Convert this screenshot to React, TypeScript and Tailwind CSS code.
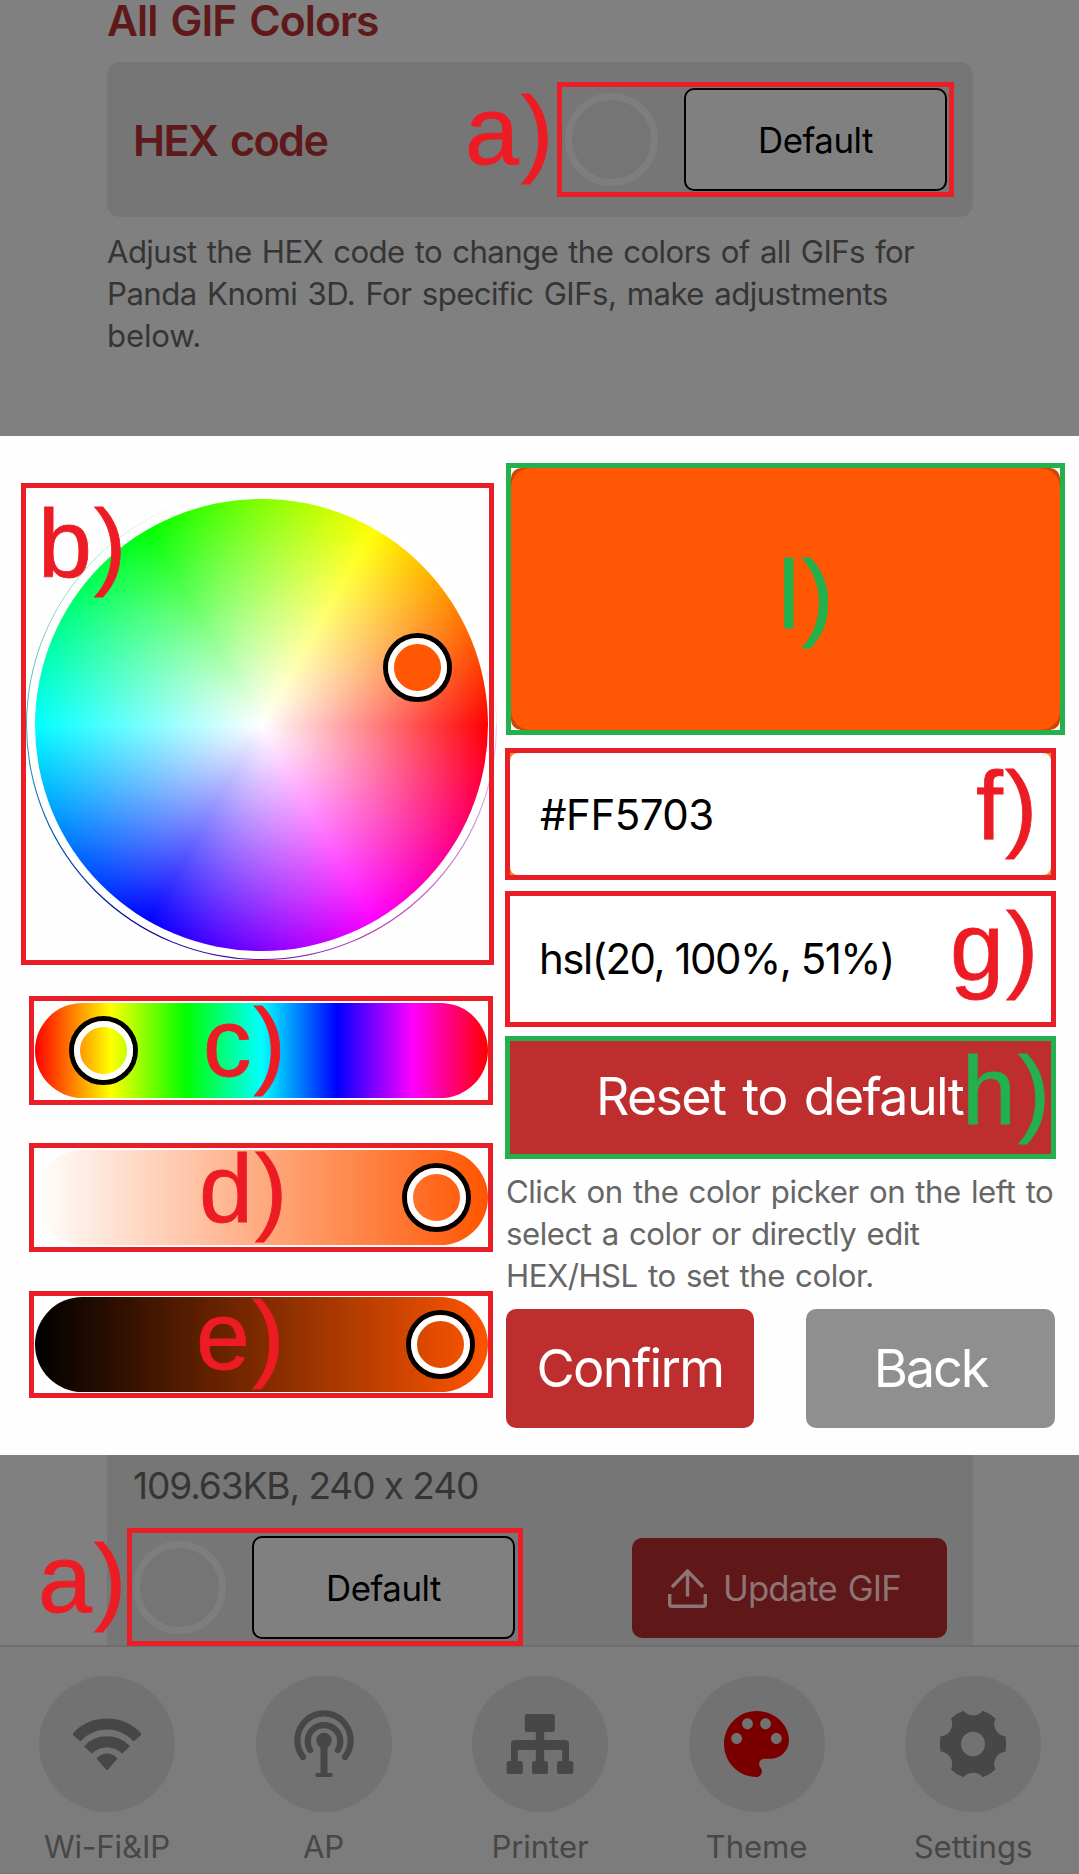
import type { ReactNode } from "react";

const HUE_WHEEL =
  "bg-[radial-gradient(circle_closest-side,#fff,transparent),conic-gradient(from_90deg,#f00,#f0f,#00f,#0ff,#0f0,#ff0,#f00)]";

function Mark({ className, children }: { className: string; children: ReactNode }) {
  return (
    <span
      className={`pointer-events-none absolute z-20 font-['Liberation_Sans',sans-serif] text-[97px] leading-[97px] tracking-[2px] whitespace-nowrap [-webkit-text-stroke:0.8px_currentColor] ${className}`}
    >
      {children}
    </span>
  );
}

function Frame({ className }: { className: string }) {
  return <div className={`pointer-events-none absolute z-10 border-[5px] ${className}`} />;
}

function Swatch() {
  return <div className="size-[93px] shrink-0 rounded-full border-[7px] border-[#7e7e7e] bg-[#757575]" />;
}

function DefaultButton() {
  return (
    <button className="flex h-[103px] w-[263px] shrink-0 items-center justify-center rounded-[10px] border-2 border-black bg-[#808080] pt-px text-[34.8px] tracking-[-0.47px] text-black">
      Default
    </button>
  );
}

function Handle({ className }: { className: string }) {
  return (
    <div className={`absolute size-[69px] rounded-full border-[5.5px] border-black ${className}`}>
      <div className="size-full rounded-full border-[6px] border-white" />
    </div>
  );
}

function WifiIcon() {
  return (
    <svg viewBox="0 0 68 68" className="size-[68px]" fill="none" stroke="currentColor" strokeWidth="11">
      <path d="M3.2 27.8A41.3 41.3 0 0 1 64.8 27.8" />
      <path d="M15 40A26 26 0 0 1 53 40" />
      <path d="M24.5 48.5C30 42.8 38 42.8 43.5 48.5L34 59.5Z" fill="currentColor" strokeWidth="1.5" strokeLinejoin="round" />
    </svg>
  );
}

function AntennaIcon() {
  return (
    <svg viewBox="0 0 68 68" className="size-[68px]" fill="none" stroke="currentColor" strokeWidth="6.2" strokeLinecap="round">
      <path d="M13 47A26.6 27 0 1 1 55 47" />
      <path d="M20 40A16.3 16.5 0 1 1 48 40" />
      <circle cx="34" cy="30.5" r="7.8" fill="currentColor" stroke="none" />
      <path d="M34 36V64" strokeWidth="7" strokeLinecap="butt" />
      <rect x="25.7" y="63" width="16.8" height="4" rx="1.2" fill="currentColor" stroke="none" />
    </svg>
  );
}

function NetworkIcon() {
  return (
    <svg viewBox="0 0 68 68" className="size-[68px]" fill="currentColor">
      <rect x="18.8" y="4" width="30" height="18" rx="2.5" />
      <rect x="29.8" y="20" width="8.4" height="33" />
      <path d="M5 53V34Q5 30 9 30H59Q63 30 63 34V53H56.2V40H11.8V53Z" />
      <rect x="0.6" y="51" width="16.3" height="13" rx="2.5" />
      <rect x="26" y="51" width="16" height="13" rx="2.5" />
      <rect x="51" y="51" width="16.3" height="13" rx="2.5" />
    </svg>
  );
}

function PaletteIcon() {
  return (
    <svg viewBox="3 3 18 18" preserveAspectRatio="none" className="h-[66px] w-[65px]" fill="currentColor">
      <path d="M12 3c-4.97 0-9 4.03-9 9s4.03 9 9 9c.83 0 1.5-.67 1.5-1.5 0-.39-.15-.74-.39-1.01-.23-.26-.38-.61-.38-.99 0-.83.67-1.5 1.5-1.5H16c2.76 0 5-2.24 5-5 0-4.42-4.03-8-9-8zm-5.5 9c-.83 0-1.5-.67-1.5-1.5S5.67 9 6.5 9 8 9.67 8 10.5 7.33 12 6.5 12zm3-4C8.67 8 8 7.33 8 6.5S8.67 5 9.5 5s1.5.67 1.5 1.5S10.33 8 9.5 8zm5 0c-.83 0-1.5-.67-1.5-1.5S13.67 5 14.5 5s1.5.67 1.5 1.5S15.33 8 14.5 8zm3 4c-.83 0-1.5-.67-1.5-1.5S16.67 9 17.5 9s1.5.67 1.5 1.5-.67 1.5-1.5 1.5z" />
    </svg>
  );
}

function GearIcon() {
  return (
    <svg viewBox="0 0 68 68" className="size-[68px]" fill="currentColor" fillRule="evenodd">
      <path d="M24.5 .8A12.5 12.5 0 0 0 43.8 .8A35 35 0 0 1 56.5 8.6A12.5 12.5 0 0 0 66.4 26.5A35 35 0 0 1 66.4 41.5A12.5 12.5 0 0 0 56.5 59.4A35 35 0 0 1 43.8 67.2A12.5 12.5 0 0 0 24.5 67.2A35 35 0 0 1 12 59.4A12.5 12.5 0 0 0 1.7 41.5A35 35 0 0 1 1.7 26.5A12.5 12.5 0 0 0 12 8.6A35 35 0 0 1 24.5 .8ZM34 21.8A12 12.2 0 1 0 34 46.2A12 12.2 0 1 0 34 21.8Z" />
    </svg>
  );
}

function UploadIcon() {
  return (
    <svg viewBox="0 0 39 39" className="mt-px size-[39px]" fill="none" stroke="currentColor" strokeWidth="3.4">
      <path d="M19.5 2V27.5M4 18L19.5 2L35 18" />
      <path d="M1.7 25V35.300Q1.700 37.300 3.700 37.300H35.300Q37.300 37.300 37.300 35.300V25" />
    </svg>
  );
}

const NAV: { label: string; icon: ReactNode; active?: boolean }[] = [
  { label: "Wi-Fi&IP", icon: <WifiIcon /> },
  { label: "AP", icon: <AntennaIcon /> },
  { label: "Printer", icon: <NetworkIcon /> },
  { label: "Theme", icon: <PaletteIcon />, active: true },
  { label: "Settings", icon: <GearIcon /> },
];

export default function App() {
  return (
    <div className="relative flex h-[1874px] w-[1079px] flex-col overflow-hidden bg-[#808080] font-['Inter',sans-serif]">
      <section className="h-[436px] shrink-0 pr-[106px] pl-[107px]">
        <h2 className="text-[42.6px] leading-[42px] font-semibold tracking-[-0.9px] text-[#5f191a] [word-spacing:3px]">
          All GIF Colors
        </h2>
        <div className="mt-5 flex h-[155px] items-center rounded-[13px] bg-[#767676] pr-[26px] pl-[26px]">
          <span className="flex-1 pt-[2px] text-[43px] font-semibold tracking-[-1.5px] text-[#5f191a] [word-spacing:3px]">
            HEX code
          </span>
          <Swatch />
          <div className="w-[26px]" />
          <DefaultButton />
        </div>
        <p className="mt-[14px] text-[31.2px] leading-[42px] tracking-[-0.62px] text-[#353535] [word-spacing:2px]">
          Adjust the HEX code to change the colors of all GIFs for
          <br />
          <span className="tracking-[-0.54px]">Panda Knomi 3D. For specific GIFs, make adjustments</span>
          <br />
          <span className="tracking-[-0.2px]">below.</span>
        </p>
      </section>

      <section className="flex h-[1019px] shrink-0 bg-[#fefefe] pl-[35px]">
        <div className="flex w-[453px] flex-col gap-[52px] pt-[62.5px]">
          <div className="relative h-[452.5px] w-[453px]">
            <div className="absolute -inset-[9px] rounded-full bg-[linear-gradient(215deg,#fff_15%,transparent_85%),conic-gradient(from_90deg,#909,#909,#009,#09a,#0c4,#dda,#f99)]" />
            <div className="absolute -inset-[8.2px] rounded-full bg-white" />
            <div className={`absolute inset-0 rounded-full ${HUE_WHEEL}`} />
            <Handle className="top-[134.5px] left-[348px] bg-[#ff5703]" />
          </div>
          <div className="relative h-[95px] rounded-full bg-[linear-gradient(to_right,#f00,#ff0,#0f0,#0ff,#00f,#f0f,#f00)]">
            <Handle className="top-[13px] left-[34px]" />
          </div>
          <div className="relative h-[95px] rounded-full bg-[linear-gradient(to_right,#fff,#ff5500)]">
            <Handle className="top-[13px] left-[367px]" />
          </div>
          <div className="relative h-[95px] rounded-full bg-[linear-gradient(to_right,#000,#ff5500)]">
            <Handle className="top-[13px] left-[371px]" />
          </div>
        </div>

        <div className="ml-[17px] flex w-[560px] flex-col pt-[27px]">
          <div className="ml-px h-[272px] w-[559px] border-[5px] border-[#22b14c] bg-white">
            <div className="size-full rounded-[10px] bg-[#c94a06]">
              <div className="size-full rounded-[20px] bg-[#ff5703]" />
            </div>
          </div>
          <div className="mt-[13px] h-[132px] w-[551px] border-[5px] border-[#e91e26] bg-[#f58a1f]">
            <div className="flex size-full items-center rounded-[8px] bg-white pl-[30px] text-[42px] tracking-[-0.5px] text-black">
              #FF5703
            </div>
          </div>
          <div className="mt-[11px] flex h-[136px] w-[551px] items-center border-[5px] border-[#e91e26] bg-white pb-[2px] pl-[29px] text-[42px] tracking-[-1.5px] text-black">
            hsl(20, 100%, 51%)
          </div>
          <button className="mt-[9px] flex h-[123px] w-[551px] items-center justify-center border-[5px] border-[#22b14c] bg-[#bf2e2f] pr-[2px] pb-[2px] text-[51.9px] tracking-[-1.6px] text-white [word-spacing:4px]">
            Reset to default
          </button>
          <p className="mt-[12px] ml-px text-[31.2px] leading-[42px] tracking-[-0.5px] whitespace-nowrap text-[#666] [word-spacing:2px]">
            Click on the color picker on the left to
            <br />
            select a color or directly edit
            <br />
            HEX/HSL to set the color.
          </p>
          <div className="mt-[12px] ml-px flex w-[549px] justify-between">
            <button className="h-[119px] w-[248px] rounded-[10px] bg-[#bf2e2f] text-[52.3px] tracking-[-1.7px] text-white">
              Confirm
            </button>
            <button className="h-[119px] w-[249px] rounded-[10px] bg-[#8f8f8f] text-[52.3px] tracking-[-2.2px] text-white">
              Back
            </button>
          </div>
        </div>
      </section>

      <section className="h-[190px] shrink-0 pr-[106px] pl-[107px]">
        <div className="h-full bg-[#767676] pt-[11px] pr-[26px] pl-[26px]">
          <div className="text-[37.1px] leading-[40px] tracking-[-1.1px] text-[#353535]">109.63KB, 240 x 240</div>
          <div className="mt-[30px] flex items-center">
            <Swatch />
            <div className="w-[26px]" />
            <DefaultButton />
            <div className="flex-1" />
            <button className="flex h-[100px] w-[315px] items-center rounded-[10px] bg-[#5f1718] pt-px pl-[36px] text-[34.7px] tracking-[-0.85px] whitespace-nowrap text-[#8d7576] [word-spacing:2px]">
              <UploadIcon />
              <span className="ml-[16px]">Update GIF</span>
            </button>
          </div>
        </div>
      </section>

      <nav className="flex flex-1 justify-between border-t-2 border-[#6e6e6e] bg-[#7c7c7c] pt-[29px] pr-[38px] pl-[39px]">
        {NAV.map(({ label, icon, active }) => (
          <div key={label} className="flex w-[136px] flex-col items-center">
            <div
              className={`flex size-[136px] items-center justify-center rounded-full bg-[#727272] ${active ? "text-[#7a0000]" : "text-[#474747]"}`}
            >
              {icon}
            </div>
            <span className="mt-[19px] text-[31.2px] leading-[32px] tracking-[-0.1px] whitespace-nowrap text-[#474747]">{label}</span>
          </div>
        ))}
      </nav>

      <Frame className="top-[82px] left-[557px] h-[115px] w-[397px] border-[#e91e26]" />
      <Frame className="top-[483px] left-[21px] h-[482px] w-[473px] border-[#e91e26]" />
      <Frame className="top-[996px] left-[29px] h-[109px] w-[464px] border-[#e91e26]" />
      <Frame className="top-[1143px] left-[29px] h-[109px] w-[464px] border-[#e91e26]" />
      <Frame className="top-[1291px] left-[29px] h-[107px] w-[464px] border-[#e91e26]" />
      <Frame className="top-[1528px] left-[127px] h-[118px] w-[396px] border-[#e91e26]" />

      <Mark className="top-[82px] left-[465px] text-[#ed1c24]">a)</Mark>
      <Mark className="top-[495px] left-[38px] text-[#ed1c24]">b)</Mark>
      <Mark className="top-[994px] left-[203px] text-[#ed1c24]">c)</Mark>
      <Mark className="top-[1140px] left-[199px] text-[#ed1c24]">d)</Mark>
      <Mark className="top-[1287px] left-[196px] text-[#ed1c24]">e)</Mark>
      <Mark className="top-[757px] left-[976px] text-[#ed1c24]">f)</Mark>
      <Mark className="top-[898px] left-[950px] text-[#ed1c24]">g)</Mark>
      <Mark className="top-[1042px] left-[962px] text-[#22b14c]">h)</Mark>
      <Mark className="top-[546px] left-[778px] text-[#22b14c]">l)</Mark>
      <Mark className="top-[1530px] left-[38px] text-[#ed1c24]">a)</Mark>
    </div>
  );
}
